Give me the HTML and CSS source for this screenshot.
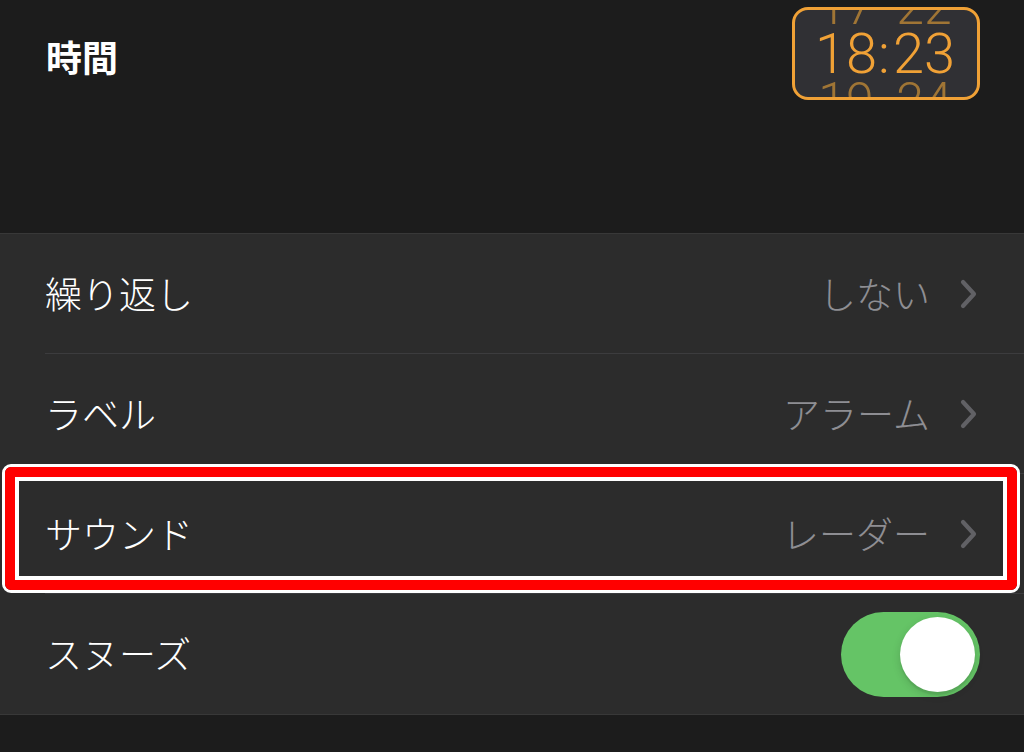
FILE: index.html
```html
<!DOCTYPE html>
<html lang="ja">
<head>
<meta charset="utf-8">
<title>時間</title>
<link rel="stylesheet" href="styles.css">
</head>
<body>
<div class="screen">
  <header class="header">
    <h1 class="title">時間</h1>
    <div class="picker">
      <div class="wheel">
        <div class="wheel-row dim"><span class="cell h">17</span><span class="cell c"></span><span class="cell m">22</span></div>
        <div class="wheel-row main"><span class="cell h">18</span><span class="cell c">:</span><span class="cell m">23</span></div>
        <div class="wheel-row dim"><span class="cell h">19</span><span class="cell c"></span><span class="cell m">24</span></div>
      </div>
    </div>
  </header>
  <section class="list">
    <div class="row sep">
      <span class="label">繰り返し</span>
      <span class="value">しない</span>
      <svg class="chev" width="17" height="30" viewBox="0 0 17 30"><path d="M3 3 L14 15 L3 27" fill="none" stroke="#616165" stroke-width="4.2" stroke-linecap="round" stroke-linejoin="round"/></svg>
    </div>
    <div class="row sep">
      <span class="label">ラベル</span>
      <span class="value">アラーム</span>
      <svg class="chev" width="17" height="30" viewBox="0 0 17 30"><path d="M3 3 L14 15 L3 27" fill="none" stroke="#616165" stroke-width="4.2" stroke-linecap="round" stroke-linejoin="round"/></svg>
    </div>
    <div class="row sep">
      <span class="label">サウンド</span>
      <span class="value">レーダー</span>
      <svg class="chev" width="17" height="30" viewBox="0 0 17 30"><path d="M3 3 L14 15 L3 27" fill="none" stroke="#616165" stroke-width="4.2" stroke-linecap="round" stroke-linejoin="round"/></svg>
    </div>
    <div class="row">
      <span class="label">スヌーズ</span>
      <span class="toggle"><span class="knob"></span></span>
    </div>
  </section>
  <div class="highlight"><div class="hl-red"><div class="hl-inner"></div></div></div>
</div>
</body>
</html>
```

FILE: styles.css
```css
html, body {
  margin: 0;
  padding: 0;
}
body {
  background: #1c1c1c;
  width: 1024px;
  height: 752px;
  overflow: hidden;
  font-family: "Noto Sans CJK JP", "Noto Sans", sans-serif;
}
.screen {
  position: relative;
  width: 1024px;
  height: 752px;
  background: #1c1c1c;
}
.header {
  box-sizing: border-box;
  height: 233px;
  display: flex;
  justify-content: space-between;
  align-items: flex-start;
  padding: 7px 44px 0 46px;
}
.title {
  margin: 29px 0 0 0;
  font-size: 36px;
  line-height: 40px;
  font-weight: 700;
  color: #ffffff;
}
.picker {
  box-sizing: border-box;
  width: 188px;
  height: 93px;
  border: 3px solid #f0a136;
  border-radius: 16px;
  background: #303034;
  overflow: hidden;
}
.wheel {
  margin-top: -24px;
  display: flex;
  flex-direction: column;
  align-items: center;
  font-family: Roboto, "Liberation Sans", sans-serif;
  font-weight: 300;
}
.wheel-row {
  display: flex;
  width: 142px;
}
.cell {
  display: block;
  text-align: center;
}
.cell.h { width: 62px; }
.cell.c { width: 14px; }
.cell.m { width: 66px; }
.wheel-row.dim {
  font-size: 50px;
  line-height: 42px;
  height: 42px;
  color: #a07535;
}
.wheel-row.main {
  font-size: 56px;
  line-height: 52px;
  height: 52px;
  color: #f0a136;
}
.list {
  background: #2c2c2c;
  border-top: 1px solid #383838;
  border-bottom: 1px solid #383838;
}
.row {
  box-sizing: border-box;
  height: 120px;
  margin-left: 45px;
  padding: 0 44px 0 0;
  display: flex;
  align-items: center;
}
.row.sep {
  border-bottom: 1px solid #3c3c3e;
}
.label {
  flex: 1;
  font-size: 37px;
  font-weight: 300;
  color: #ffffff;
  line-height: 40px;
  margin-top: -2px;
}
.value {
  font-size: 37px;
  font-weight: 300;
  line-height: 40px;
  color: #8e8e93;
  margin-right: 30px;
  margin-top: -2px;
}
.chev {
  display: block;
  margin-right: 3px;
}
.toggle {
  position: relative;
  display: block;
  width: 139px;
  height: 85px;
  border-radius: 43px;
  background: #65c466;
}
.knob {
  position: absolute;
  right: 5px;
  top: 5px;
  width: 75px;
  height: 75px;
  border-radius: 50%;
  background: #ffffff;
  box-shadow: 0 3px 8px rgba(0, 0, 0, 0.15), 0 3px 1px rgba(0, 0, 0, 0.06);
}
.highlight {
  position: absolute;
  left: 2px;
  top: 464px;
  width: 1018px;
  height: 129px;
  box-sizing: border-box;
  border: 3px solid #ffffff;
  border-radius: 9px;
}
.hl-red {
  box-sizing: border-box;
  width: 100%;
  height: 100%;
  border: 10px solid #ff0000;
  border-radius: 6px;
}
.hl-inner {
  box-sizing: border-box;
  width: 100%;
  height: 100%;
  border: 4px solid #ffffff;
}
```
